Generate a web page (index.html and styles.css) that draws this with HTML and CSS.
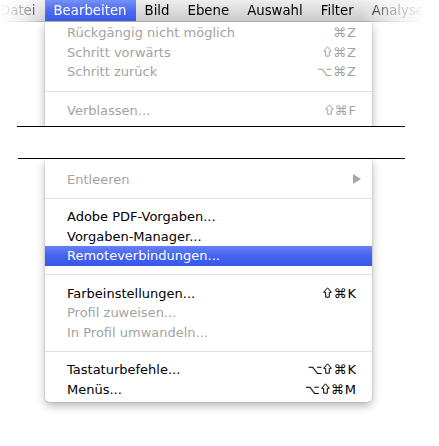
FILE: index.html
```html
<!DOCTYPE html>
<html lang="de">
<head>
<meta charset="utf-8">
<title>Bearbeiten</title>
<link rel="stylesheet" href="styles.css">
</head>
<body>
<div class="clip-top">
  <nav class="menubar">
    <span class="mb-item first">Datei</span>
    <span class="mb-item active">Bearbeiten</span>
    <span class="mb-item">Bild</span>
    <span class="mb-item">Ebene</span>
    <span class="mb-item">Auswahl</span>
    <span class="mb-item">Filter</span>
    <span class="mb-item">Analyse</span>
  </nav>
  <div class="menu menu-a">
    <div class="item dis"><span>Rückgängig nicht möglich</span><span class="sc">⌘Z</span></div>
    <div class="item dis"><span>Schritt vorwärts</span><span class="sc"><svg class="shift" width="9" height="11" viewBox="0 0 9 11"><path d="M4.5 0.8 L8.4 5.3 H6.3 V10.2 H2.7 V5.3 H0.6 Z" fill="none" stroke="currentColor" stroke-width="1"/></svg>⌘Z</span></div>
    <div class="item dis"><span>Schritt zurück</span><span class="sc">⌥⌘Z</span></div>
    <div class="sep sep-wide"></div>
    <div class="item dis"><span>Verblassen...</span><span class="sc"><svg class="shift" width="9" height="11" viewBox="0 0 9 11"><path d="M4.5 0.8 L8.4 5.3 H6.3 V10.2 H2.7 V5.3 H0.6 Z" fill="none" stroke="currentColor" stroke-width="1"/></svg>⌘F</span></div>
  </div>
</div>
<div class="cut"></div>
<div class="gap"></div>
<div class="cut cut-b"></div>
<div class="clip-bottom">
  <div class="menu menu-b">
    <div class="item dis"><span>Entleeren</span><svg class="arrow" width="8" height="10" viewBox="0 0 8 10"><polygon points="0,0 8,5 0,10" fill="#a6a6a6"/></svg></div>
    <div class="sep"></div>
    <div class="item"><span>Adobe PDF-Vorgaben...</span></div>
    <div class="item"><span>Vorgaben-Manager...</span></div>
    <div class="item hl"><span>Remoteverbindungen...</span></div>
    <div class="sep"></div>
    <div class="item"><span>Farbeinstellungen...</span><span class="sc"><svg class="shift" width="9" height="11" viewBox="0 0 9 11"><path d="M4.5 0.8 L8.4 5.3 H6.3 V10.2 H2.7 V5.3 H0.6 Z" fill="none" stroke="currentColor" stroke-width="1"/></svg>⌘K</span></div>
    <div class="item dis"><span>Profil zuweisen...</span></div>
    <div class="item dis"><span>In Profil umwandeln...</span></div>
    <div class="sep"></div>
    <div class="item"><span>Tastaturbefehle...</span><span class="sc">⌥<svg class="shift" width="9" height="11" viewBox="0 0 9 11"><path d="M4.5 0.8 L8.4 5.3 H6.3 V10.2 H2.7 V5.3 H0.6 Z" fill="none" stroke="currentColor" stroke-width="1"/></svg>⌘K</span></div>
    <div class="item"><span>Menüs...</span><span class="sc">⌥<svg class="shift" width="9" height="11" viewBox="0 0 9 11"><path d="M4.5 0.8 L8.4 5.3 H6.3 V10.2 H2.7 V5.3 H0.6 Z" fill="none" stroke="currentColor" stroke-width="1"/></svg>⌘M</span></div>
  </div>
</div>
</body>
</html>
```
FILE: styles.css
```css
html, body {
  margin: 0;
  padding: 0;
  background: #ffffff;
}
body {
  width: 439px;
  height: 446px;
  overflow: hidden;
  font-family: "DejaVu Sans", "Liberation Sans", sans-serif;
  font-size: 13px;
  color: #000;
}
.clip-top {
  overflow: hidden;
  height: 126px;
}
.menubar {
  display: flex;
  height: 21px;
  border-bottom: 1px solid #a8a8a8;
  background: linear-gradient(#eeeeee, #dcdcdc 50%, #cbcbcb);
  font-size: 13.3px;
  line-height: 21px;
  -webkit-mask-image: linear-gradient(to right, rgba(0,0,0,0) 0, rgba(0,0,0,0.05) 4px, rgba(0,0,0,0.35) 24px, rgba(0,0,0,0.7) 38px, #000 47px, #000 360px, rgba(0,0,0,0.35) 392px, rgba(0,0,0,0) 425px);
  mask-image: linear-gradient(to right, rgba(0,0,0,0) 0, rgba(0,0,0,0.05) 4px, rgba(0,0,0,0.35) 24px, rgba(0,0,0,0.7) 38px, #000 47px, #000 360px, rgba(0,0,0,0.35) 392px, rgba(0,0,0,0) 425px);
  position: relative;
  z-index: 2;
}
.mb-item {
  padding: 0 9px;
  white-space: nowrap;
  flex: none;
}
.mb-item.first {
  margin-left: -9px;
  padding-right: 10px;
}
.mb-item.active {
  padding: 0 9px 0 8px;
  color: #fff;
  background: linear-gradient(#7590f6, #4d6cf0 50%, #3a5ae9);
}
.menu {
  margin-left: 45px;
  width: 327px;
  background: #fff;
  box-shadow: 0 4px 10px rgba(0,0,0,0.28), 0 0 0 1px rgba(0,0,0,0.07);
}
.menu-a {
  padding-top: 1px;
  height: 125px;
  box-sizing: border-box;
}
.item {
  display: flex;
  justify-content: space-between;
  align-items: center;
  height: 19.5px;
  line-height: 19.5px;
  padding: 0 15px 0 22px;
  white-space: nowrap;
}
.item.dis {
  color: #a3a3a3;
}
.item.hl {
  color: #fff;
  background: linear-gradient(#6581f3, #4463ee 50%, #3757e8);
}
.sc {
  display: flex;
  align-items: center;
  font-size: 13px;
  letter-spacing: 1px;
}
.shift {
  margin-right: 1px;
  position: relative;
  top: -1px;
}
.sep {
  height: 18px;
  display: flex;
  align-items: center;
}
.sep::before {
  content: "";
  display: block;
  width: 100%;
  height: 1px;
  background: #e2e2e2;
}
.sep-wide {
  height: 19.5px;
}
.arrow {
  margin-right: -4px;
}
.cut {
  margin-left: 17px;
  width: 388px;
  height: 1px;
  background: #000;
}
.cut-b {
  margin-left: 18px;
  width: 387px;
}
.gap {
  height: 31px;
}
.clip-bottom {
  overflow: hidden;
  padding: 0 0 30px;
}
.menu-b {
  padding: 10.5px 0 2.5px;
  border-radius: 0 0 5px 5px;
}
```
